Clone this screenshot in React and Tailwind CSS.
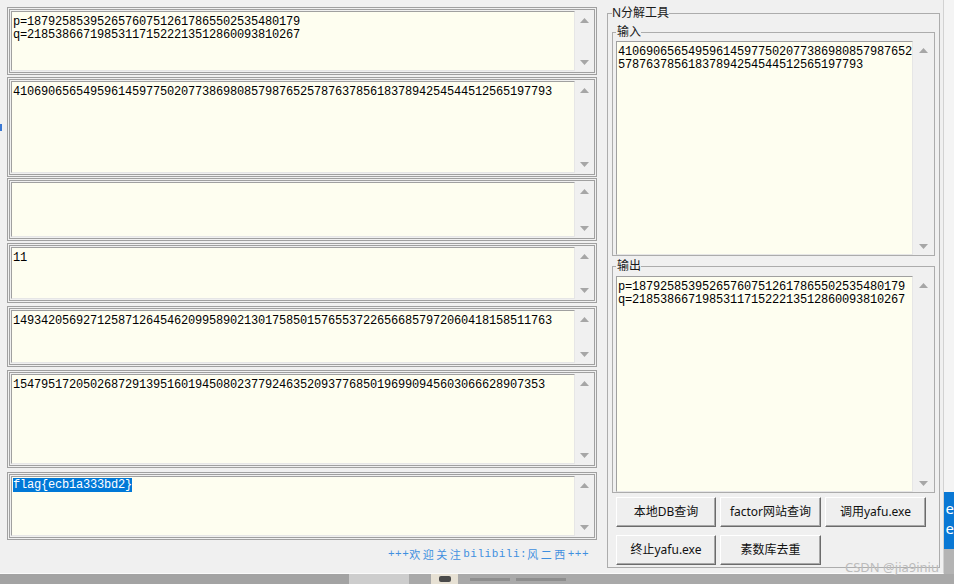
import React from "react";

const mono =
  "font-['Liberation_Mono',monospace] text-[12px] leading-[13px] tracking-[-0.2px] text-black";
const ui = "font-['Noto_Sans','Noto_Sans_CJK_SC',sans-serif]";

function Scroll({ w }) {
  return (
    <div className={`${w} flex flex-col items-center justify-between pt-[7px] pb-[6px] bg-[#f0f0f0]`}>
      <svg width="9" height="5" viewBox="0 0 9 5">
        <path d="M0 5 L4.5 0 L9 5Z" fill="#a6a6a6" />
      </svg>
      <svg width="9" height="5" viewBox="0 0 9 5">
        <path d="M0 0 L4.5 5 L9 0Z" fill="#a6a6a6" />
      </svg>
    </div>
  );
}

function Box({ h, mt, pt = "pt-[4px]", children }) {
  return (
    <div className={`flex border-[3px] border-double border-[#a0a0a0] p-[1px] ${mt}`}>
      <div
        className={`flex-1 ${h} ${pt} bg-[#fefef0] border border-t-[#a0a0a0] border-l-[#a0a0a0] border-r-[#e6e6e6] border-b-[#e6e6e6] pl-[1px] whitespace-pre overflow-hidden ${mono}`}
      >
        {children}
      </div>
      <Scroll w="w-[18px]" />
    </div>
  );
}

function Btn({ children, w }) {
  return (
    <div
      className={`${w} h-[30px] flex items-center justify-center bg-[#efefef] border border-t-white border-l-white border-r-[#6b6b6b] border-b-[#6b6b6b] shadow-[inset_-1px_-1px_0_#a8a8a8] text-[12px] text-[#111] ${ui}`}
    >
      {children}
    </div>
  );
}

function RightArea({ h, mt, children }) {
  return (
    <div className={`flex ${mt}`}>
      <div
        className={`flex-1 ${h} bg-[#fefef0] border border-t-[#a0a0a0] border-l-[#a0a0a0] border-r-[#e6e6e6] border-b-[#e6e6e6] pl-[1px] pt-[4px] whitespace-pre overflow-hidden ${mono}`}
      >
        {children}
      </div>
      <Scroll w="w-[21px]" />
    </div>
  );
}

export default function App() {
  const pq =
    "p=187925853952657607512617865502535480179\nq=218538667198531171522213512860093810267";
  const n = "41069065654959614597750207738698085798765257876378561837894254544512565197793";
  return (
    <div className="relative w-[954px] h-[584px] overflow-hidden bg-[#a8a8a8] flex flex-col">
      <div className="flex h-[574px]">
        {/* main window */}
        <div className="w-[944px] h-[574px] flex bg-[#f0f0f0] border-r border-r-[#d2d2d2] border-b border-b-[#fafafa]">
          {/* left edge artifact */}
          <div className="w-[7px] shrink-0">
            <div className="mt-[124px] w-[2px] h-[7px] bg-[#3a78d4]" />
          </div>
          {/* left column */}
          <div className="w-[593px] shrink-0 pt-[7px] pr-[3px] flex flex-col">
            <Box h="h-[60px]" mt="">{pq}</Box>
            <Box h="h-[92px]" mt="mt-[2px]">{n}</Box>
            <Box h="h-[55px]" mt="mt-[1px]">{""}</Box>
            <Box h="h-[52px]" mt="mt-[2px]">11</Box>
            <Box h="h-[53px]" mt="mt-[3px]">
              14934205692712587126454620995890213017585015765537226566857972060418158511763
            </Box>
            <Box h="h-[90px]" mt="mt-[3px]">
              1547951720502687291395160194508023779246352093776850196990945603066628907353
            </Box>
            <Box h="h-[60px]" mt="mt-[4px]" pt="pt-[2px]">
              <span className="bg-[#0078d7] text-white">flag{"{"}ecb1a333bd2{"}"}</span>
            </Box>
            <div className="mt-[6px] flex justify-end pr-[8px] h-[16px] items-center text-[#3f8fdf] text-[11px] leading-[16px]">
              <span className="font-['Liberation_Mono',monospace] tracking-[0.5px]">+++</span>
              <span className="font-['Noto_Sans_CJK_SC',sans-serif] tracking-[2.5px]">欢迎关注</span>
              <span className="font-['Liberation_Mono',monospace] tracking-[0.5px]">bilibili:</span>
              <span className="font-['Noto_Sans_CJK_SC',sans-serif] tracking-[2.5px]">风二西</span>
              <span className="font-['Liberation_Mono',monospace] tracking-[0.5px]">+++</span>
            </div>
          </div>
          {/* right column */}
          <div className="flex-1 pt-[5px]">
            <fieldset className="ml-[7px] w-[333px] border border-[#acacac] px-[4px] pb-[2px]">
              <legend className={`text-[12px] leading-[16px] text-[#1a1a1a] ${ui}`}>N分解工具</legend>
              <fieldset className="mt-[3px] border border-[#acacac] pl-[3px]">
                <legend className={`pl-[1px] text-[12px] leading-[16px] text-[#1a1a1a] ${ui}`}>输入</legend>
                <RightArea h="h-[214px]" mt="mt-[1px]">
                  {"410690656549596145977502077386980857987652\n57876378561837894254544512565197793"}
                </RightArea>
              </fieldset>
              <fieldset className="mt-[2px] border border-[#acacac] pl-[3px]">
                <legend className={`pl-[1px] text-[12px] leading-[16px] text-[#1a1a1a] ${ui}`}>输出</legend>
                <RightArea h="h-[216px]" mt="mt-[2px]">{pq}</RightArea>
              </fieldset>
              <div className="mt-[4px] pl-[4px] flex flex-col gap-[8px]">
                <div className="flex gap-[4px]">
                  <Btn w="w-[100px]">本地DB查询</Btn>
                  <Btn w="w-[101px]">factor网站查询</Btn>
                  <Btn w="w-[101px]">调用yafu.exe</Btn>
                </div>
                <div className="flex gap-[4px]">
                  <Btn w="w-[100px]">终止yafu.exe</Btn>
                  <Btn w="w-[101px]">素数库去重</Btn>
                </div>
              </div>
            </fieldset>
          </div>
        </div>
        {/* outside right strip */}
        <div className="flex-1 flex flex-col">
          <div className="h-[492px] bg-[#f4f4f4]" />
          <div className="h-[57px] bg-[#0a78d4] flex flex-col pt-[8px] gap-[4px] overflow-hidden">
            <span className={`ml-[2px] text-white text-[15px] leading-[16px] ${ui}`}>e</span>
            <span className={`ml-[2px] text-white text-[15px] leading-[16px] ${ui}`}>e</span>
          </div>
          <div className="flex-1 bg-[#b4b4b4]" />
        </div>
      </div>
      {/* bottom strip (desktop behind) */}
      <div className="flex-1 flex">
        <div className="w-[349px] bg-[#a3a3a3]" />
        <div className="w-[60px] bg-[#cdcdcd]" />
        <div className="w-[22px] bg-[#a9a9a9]" />
        <div className="w-[27px] bg-[#e7e1d4] flex justify-center pt-[2px]">
          <div className="w-[12px] h-[6px] bg-[#4a4a4a] rounded-[2px]" />
        </div>
        <div className="flex-1 bg-[#a9a9a9] flex items-center gap-[6px] pl-[12px]">
          <div className="w-[40px] h-[3px] bg-[#8e8e8e]" />
          <div className="w-[50px] h-[3px] bg-[#8e8e8e]" />
        </div>
      </div>
      {/* watermark */}
      <div className={`absolute left-[845px] top-[558px] text-[13px] leading-[18px] text-[#bcbcbc] ${ui}`}>
        CSDN @jia9iniu
      </div>
    </div>
  );
}
